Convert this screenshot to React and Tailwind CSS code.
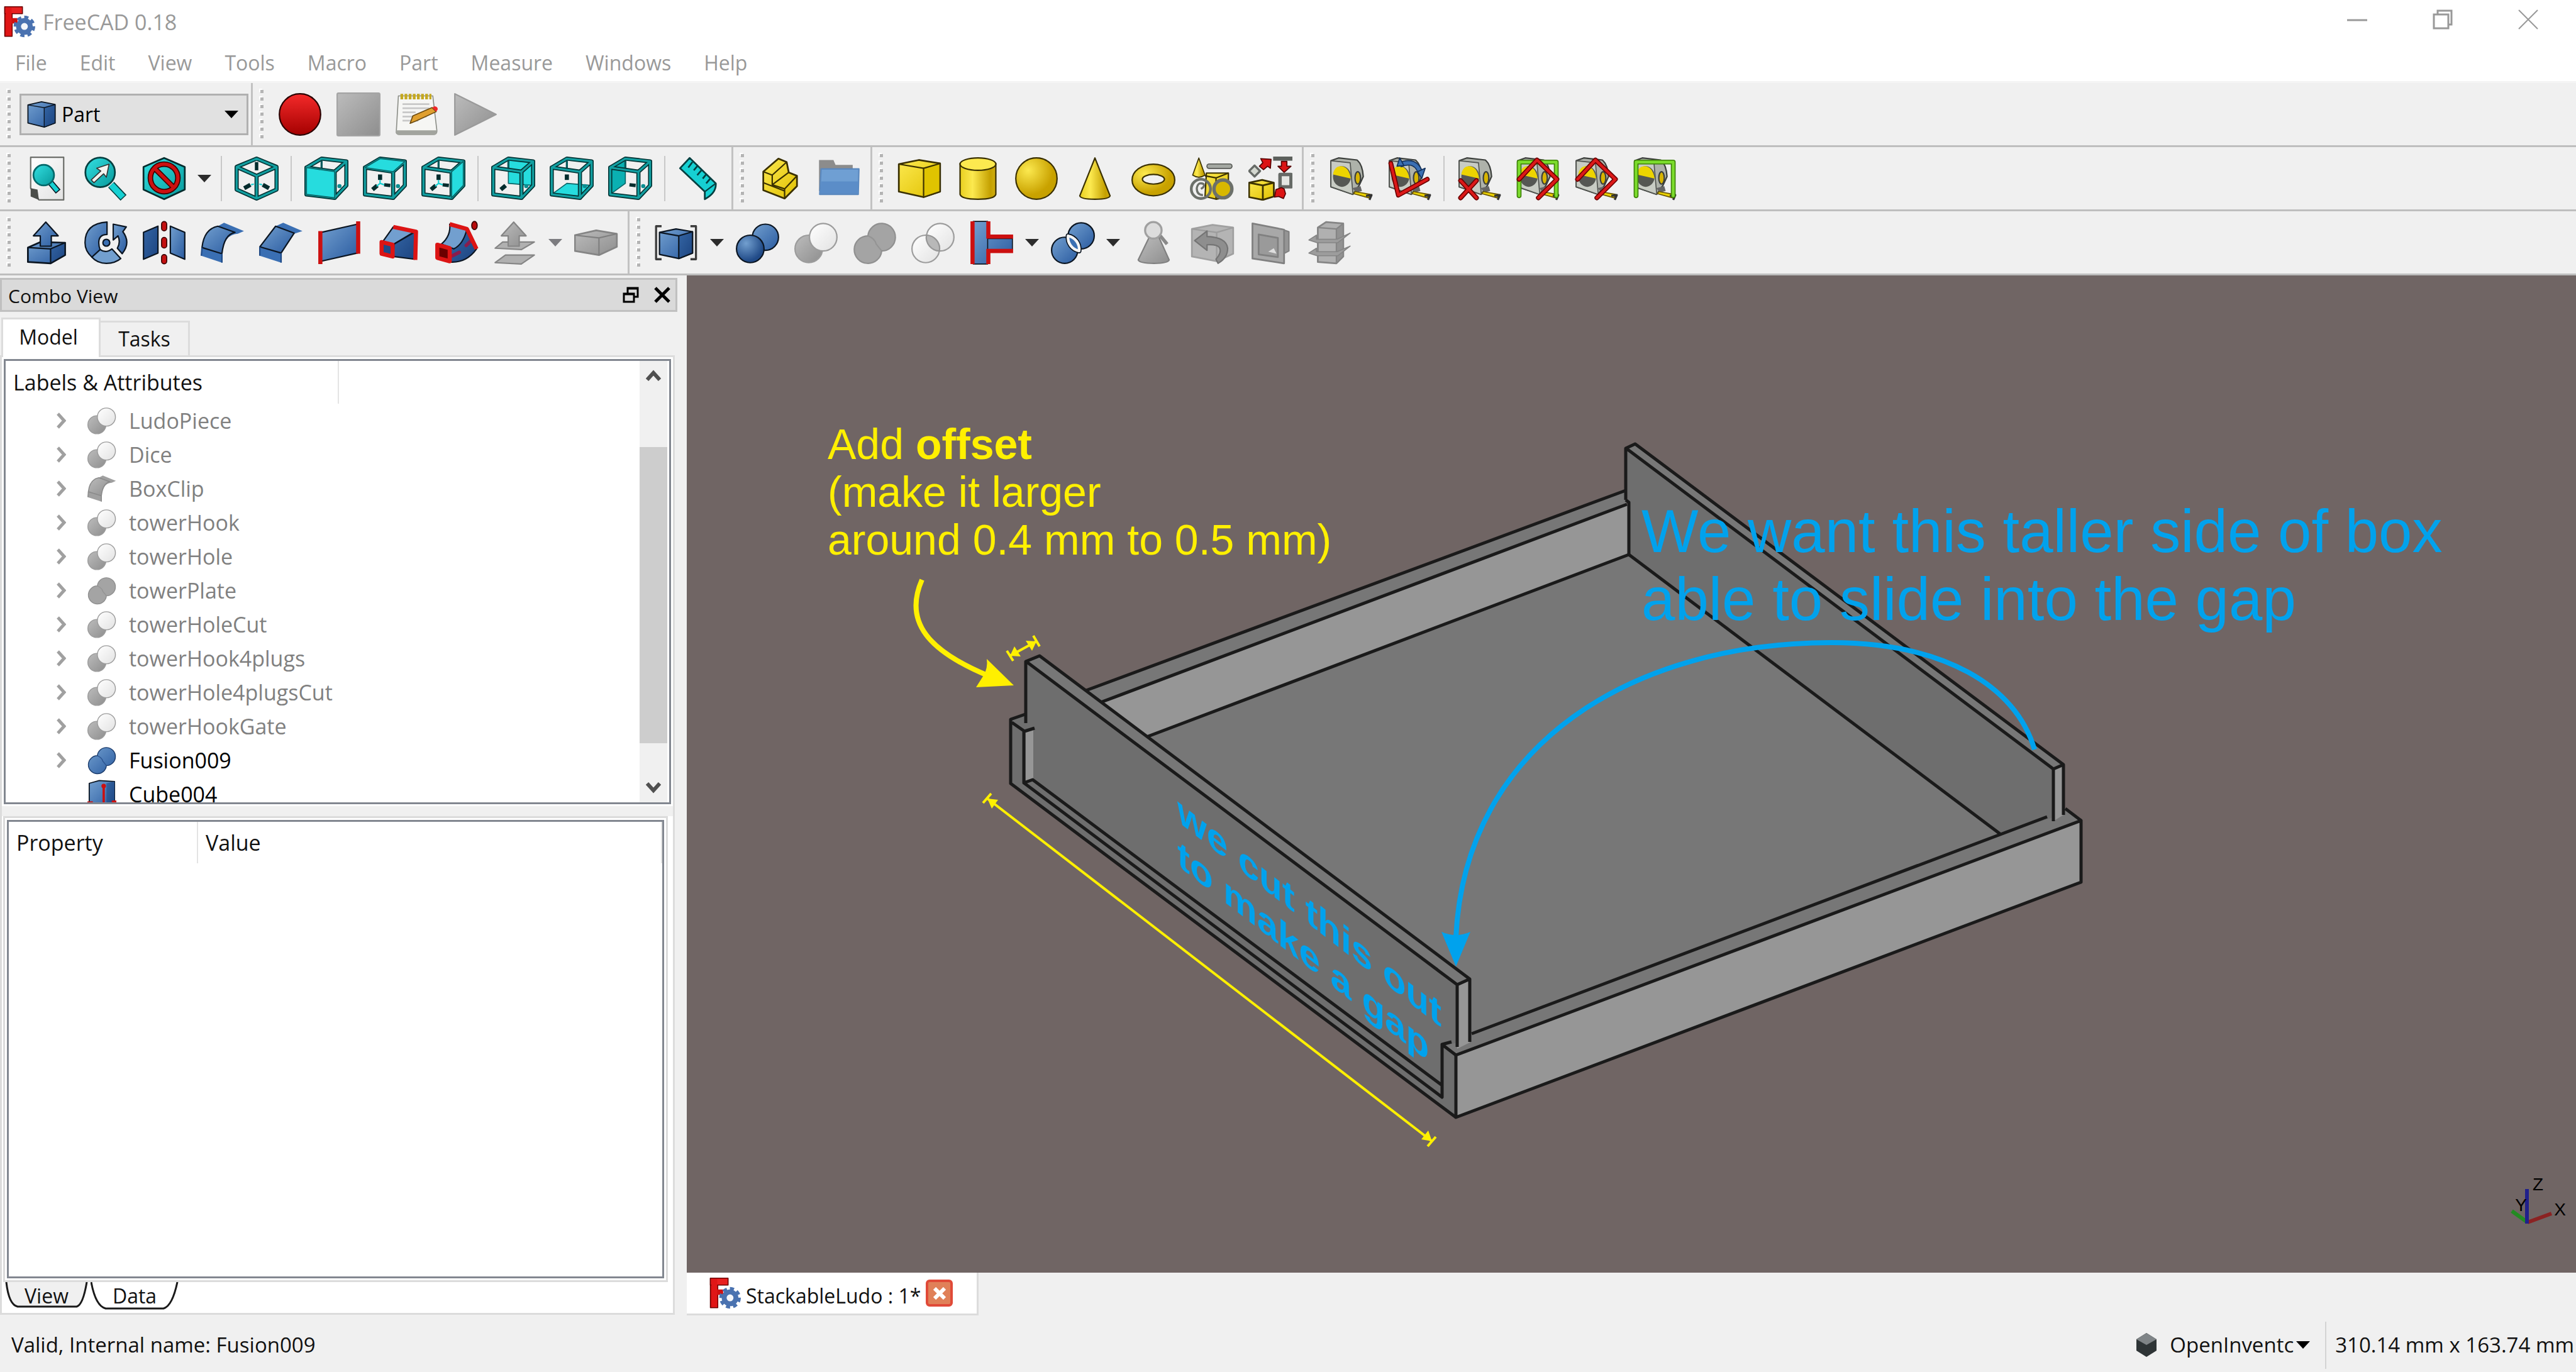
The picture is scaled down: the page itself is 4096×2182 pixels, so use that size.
import React from 'react';

const TEAL = '#16d0d2';
const TEAL_DARK = '#0b8f92';
const BLUE = '#3a6fb3';
const BLUE_LIGHT = '#729fcf';
const BLUE_DARK = '#1f4a87';
const INK = '#0b1521';

/* Gradients shared by every icon on the page */
const Gradients = () => (
  <svg className="absolute h-0 w-0" aria-hidden="true">
    <defs>
      <linearGradient id="blue" x1="0" y1="0" x2="1" y2="1">
        <stop offset="0" stopColor="#729fcf" />
        <stop offset="1" stopColor="#2a5ba0" />
      </linearGradient>
      <linearGradient id="navy" x1="0" y1="0" x2="1" y2="1">
        <stop offset="0" stopColor="#3465a4" />
        <stop offset="1" stopColor="#1c4480" />
      </linearGradient>
      <linearGradient id="yellow" x1="0" y1="0" x2="1" y2="1">
        <stop offset="0" stopColor="#fce94f" />
        <stop offset="1" stopColor="#e0c000" />
      </linearGradient>
      <radialGradient id="gold" cx="0.3" cy="0.3" r="0.8">
        <stop offset="0" stopColor="#fce94f" />
        <stop offset="0.75" stopColor="#c9a200" />
        <stop offset="1" stopColor="#c4a000" />
      </radialGradient>
      <linearGradient id="tube" x1="0" y1="0" x2="1" y2="0">
        <stop offset="0" stopColor="#e8cf20" />
        <stop offset="0.35" stopColor="#fce94f" />
        <stop offset="0.85" stopColor="#c4a000" />
        <stop offset="1" stopColor="#d0ae10" />
      </linearGradient>
      <radialGradient id="ball" cx="0.35" cy="0.3" r="0.8">
        <stop offset="0" stopColor="#729fcf" />
        <stop offset="0.8" stopColor="#204a87" />
      </radialGradient>
      <linearGradient id="grey" x1="0" y1="0" x2="1" y2="1">
        <stop offset="0" stopColor="#bcbcbc" />
        <stop offset="1" stopColor="#8e8e8e" />
      </linearGradient>
      <linearGradient id="white" x1="0" y1="0" x2="1" y2="1">
        <stop offset="0" stopColor="#ffffff" />
        <stop offset="1" stopColor="#e2e2e2" />
      </linearGradient>
      <linearGradient id="red" x1="0" y1="0" x2="0" y2="1">
        <stop offset="0" stopColor="#f42a2a" />
        <stop offset="1" stopColor="#a40000" />
      </linearGradient>
      <linearGradient id="teal" x1="0" y1="0" x2="1" y2="1">
        <stop offset="0" stopColor="#34e0e2" />
        <stop offset="1" stopColor="#06989a" />
      </linearGradient>
    </defs>
  </svg>
);

const Icon = ({ className = 'h-[70px] w-[70px]', children }) => (
  <svg viewBox="0 0 64 64" className={className} strokeLinejoin="round" aria-hidden="true">
    {children}
  </svg>
);

const Logo = ({ className }) => (
  <Icon className={className}>
    <rect x="2" y="1" width="15" height="60" fill="#d01010" stroke="#6a0000" strokeWidth="2" />
    <rect x="2" y="1" width="36" height="14" fill="#e82020" stroke="#6a0000" strokeWidth="2" />
    <rect x="10" y="24" width="18" height="11" fill="#d01010" />
    <rect x="4" y="3" width="12" height="57" fill="#e01616" />
    <circle cx="42" cy="41" r="18" fill="none" stroke="#4a72b0" strokeWidth="8" strokeDasharray="8 6" />
    <circle cx="42" cy="41" r="12" fill="#f4f6fa" stroke="#4a72b0" strokeWidth="10" />
  </Icon>
);

/* --- Macro icons --- */

const Record = () => (
  <Icon><circle cx="32" cy="32" r="30" fill="url(#red)" stroke="#280000" strokeWidth="2" /></Icon>
);
const Stop = () => (
  <Icon><rect x="1" y="1" width="62" height="62" rx="2" fill="url(#grey)" stroke="#a4a4a4" strokeWidth="2" /></Icon>
);
const Macros = () => (
  <Icon>
    <path d="M5 5H55L61 56Q61 61 56 61H6Q1 61 2 56Z" fill="#f6f6f4" stroke="#8c8e88" strokeWidth="1.5" />
    <path d="M2 55H61V58Q60 62 56 62H6Q2 62 2 58Z" fill="#a2a49e" />
    <path d="M8 6H53" stroke="#c4a820" strokeWidth="8" strokeDasharray="4 2" />
    <path d="M11 17H50M11 23H50M11 29H30M11 35H46M11 41H34" stroke="#c8c8c8" strokeWidth="2.5" />
    <path d="M22 45L26 34L54 22L60 28L32 41Z" fill="#e0a030" stroke="#6b4a10" strokeWidth="1.5" />
    <path d="M54 22L58 20Q63 21 62 25L60 28Z" fill="#ef2929" />
  </Icon>
);
const Play = () => (
  <Icon><path d="M2 2L62 32L2 62Z" fill="url(#grey)" stroke="#9a9a9a" strokeWidth="2" /></Icon>
);

/* --- View icons --- */

const FitAll = () => (
  <Icon>
    <path d="M8 1H56V63H20L8 46Z" fill="url(#white)" stroke="#6c6e6a" strokeWidth="2" />
    <path d="M8 46L18 48L20 63L8 58Z" fill="#4c4e4a" />
    <path d="M37 38L48 51" stroke={INK} strokeWidth="9" />
    <path d="M37 38L47 50" stroke={TEAL} strokeWidth="6" />
    <circle cx="27" cy="27" r="15" fill="url(#teal)" stroke="#04686a" strokeWidth="2.5" />
  </Icon>
);
const FitSelection = () => (
  <Icon>
    <path d="M40 41L58 60" stroke="#053f40" strokeWidth="12" />
    <path d="M40 41L57 59" stroke={TEAL} strokeWidth="9" />
    <circle cx="24" cy="23" r="21.5" fill="url(#teal)" stroke="#053f40" strokeWidth="2.5" />
    <path d="M11 34L25 21L19 17L37 11L33 30L29 25L15 38Z" fill="#f2f4f0" stroke="#333" strokeWidth="1.5" />
  </Icon>
);
const DrawStyle = () => (
  <Icon>
    <path d="M32 2L62 15V48L32 62L2 48V15Z" fill="url(#teal)" stroke="#052c2d" strokeWidth="2.5" />
    <circle cx="32" cy="31" r="20" fill="none" stroke="#3a0000" strokeWidth="8" />
    <path d="M18 17L46 45" stroke="#3a0000" strokeWidth="8" />
    <circle cx="32" cy="31" r="20" fill="none" stroke="#cc1010" strokeWidth="5" />
    <path d="M18 17L46 45" stroke="#cc1010" strokeWidth="5" />
  </Icon>
);
const Isometric = () => {
  const d = 'M32 3L61 15V48L32 61L3 48V15ZM3 15L32 28L61 15M32 28V61';
  return (
    <Icon>
      <path d="M32 8V20" stroke="#032c2d" strokeWidth="5" />
      <path d="M14 46L23 41M50 46L41 41" stroke="#032c2d" strokeWidth="6" />
      <path d="M24 41L28 40M40 41L36 40" stroke={TEAL} strokeWidth="2" />
      <path d={d} fill="none" stroke="#043233" strokeWidth="6" />
      <path d={d} fill="none" stroke="#129fa1" strokeWidth="3" />
    </Icon>
  );
};

const FACES = {
  front: '3,16 44,22 44,60 3,55',
  top: '3,16 25,3 61,7 44,22',
  right: '44,22 61,7 61,42 44,60',
  rear: '25,3 61,7 61,42 25,39',
  bottom: '3,55 25,39 61,42 44,60',
  left: '3,16 25,3 25,39 3,55',
};

const ViewCube = ({ face }) => {
  const near = face === 'front' || face === 'top' || face === 'right';
  const fill = face === 'left' ? '#0ab0b2' : '#26dcde';
  const frame = 'M3 16L44 22V60L3 55ZM3 16L25 3L61 7L44 22M61 7V42L44 60';
  return (
    <Icon>
      {!near && <polygon points={FACES[face]} fill={fill} stroke="#0a6668" strokeWidth="1.5" />}
      <path d="M25 6V18" stroke="#0b5c5e" strokeWidth="3" />
      {face !== 'rear' && face !== 'left' && <path d="M25 26V34" stroke="#032c2d" strokeWidth="6" />}
      {face !== 'bottom' && face !== 'left' && <path d="M14 48L21 42" stroke="#032c2d" strokeWidth="6" />}
      {face !== 'rear' && face !== 'bottom' && <path d="M31 41L40 42" stroke="#032c2d" strokeWidth="5" />}
      {near && <path d="M20 43L25 39L31 41M25 39V34" fill="none" stroke={TEAL} strokeWidth="2" />}
      <circle cx="51" cy="43" r="3" fill={TEAL_DARK} />
      <path d={frame} fill="none" stroke="#043233" strokeWidth="6" />
      <path d={frame} fill="none" stroke="#129fa1" strokeWidth="3" />
      {near && <polygon points={FACES[face]} fill={fill} stroke="#0a6668" strokeWidth="1.5" />}
    </Icon>
  );
};

const Ruler = () => (
  <Icon>
    <path d="M3 17L17 2L55 39Q56 53 39 62V51Z" fill={TEAL} stroke="#053f40" strokeWidth="2.5" />
    <path d="M39 51L55 39" stroke="#053f40" strokeWidth="2" />
    <path d="M21 8L15 16M28 14L23 20M34 20L28 27M41 26L36 32M47 32L41 39" stroke="#053f40" strokeWidth="2.5" />
  </Icon>
);

/* --- Structure icons --- */

const Part = () => (
  <Icon>
    <path d="M7 22L29 3L41 8L44 23L56 28V43L38 61L7 49Z" fill="url(#yellow)" stroke="#3a3000" strokeWidth="2.5" />
    <path d="M7 22L20 27L41 8M20 27V41L44 23M7 38L38 50V61M20 41L38 47L56 28M38 47V50" fill="none" stroke="#3a3000" strokeWidth="2" />
  </Icon>
);
const Group = () => (
  <Icon>
    <path d="M3 5H24L27 12H52V50H3Z" fill="#8c8c8c" />
    <path d="M6 18H61L60 55H4Z" fill="#6f9fd3" stroke="#5a88be" strokeWidth="2" />
    <path d="M6 36H60V54H5Z" fill="#5b8dc8" />
  </Icon>
);

/* --- Solid icons --- */

const Box = () => (
  <Icon>
    <path d="M2 11L31 5L62 10V51L38 59L2 51Z" fill="url(#yellow)" stroke="#3a3000" strokeWidth="2.5" />
    <path d="M38 17L62 10V51L38 59Z" fill="#e0c400" stroke="#3a3000" strokeWidth="2" />
    <path d="M2 11L38 17" stroke="#3a3000" strokeWidth="2" />
  </Icon>
);
const Cylinder = () => (
  <Icon>
    <path d="M6 10V55Q8 62 32 62Q56 62 58 55V10Z" fill="url(#tube)" stroke="#3a3000" strokeWidth="2" />
    <ellipse cx="32" cy="11" rx="26" ry="9" fill="#fce94f" stroke="#3a3000" strokeWidth="2" />
  </Icon>
);
const Sphere = () => (
  <Icon><circle cx="32" cy="32" r="30" fill="url(#gold)" stroke="#3a3000" strokeWidth="2" /></Icon>
);
const Cone = () => (
  <Icon><path d="M32 2L54 57Q53 62 32 62Q11 62 10 57Z" fill="url(#tube)" stroke="#3a3000" strokeWidth="2" /></Icon>
);
const Torus = () => (
  <Icon>
    <path
      fillRule="evenodd"
      d="M1 34A31 23 0 0 0 63 34A31 23 0 0 0 1 34ZM16 33A16 7 0 0 0 48 33A16 7 0 0 0 16 33Z"
      fill="url(#gold)"
      stroke="#3a3000"
      strokeWidth="2"
    />
  </Icon>
);
const Primitives = () => (
  <Icon>
    <path d="M24 24L56 24V58L38 62L22 58Z" fill="url(#yellow)" stroke="#3a3000" strokeWidth="2" />
    <path d="M22 28L38 31L56 24M38 31V62" fill="none" stroke="#3a3000" strokeWidth="2" />
    <path d="M13 2L22 27Q13 33 4 27Z" fill="url(#tube)" stroke="#3a3000" strokeWidth="1.5" />
    <path d="M28 14H58" stroke="#555753" strokeWidth="8" strokeLinecap="round" />
    <path d="M28 14H58" stroke="#a4a8a2" strokeWidth="5" strokeLinecap="round" />
    <circle cx="16" cy="47" r="14" fill="none" stroke="#6c706a" strokeWidth="4" />
    <path d="M16 47Q22 44 20 40Q12 36 10 46Q10 56 19 56" fill="none" stroke="#6c706a" strokeWidth="3" />
    <circle cx="48" cy="47" r="13" fill="#d8b800" stroke="#6c706a" strokeWidth="5" />
  </Icon>
);
const Builder = () => (
  <Icon>
    <path d="M1 38L20 34L37 38V58L21 63L1 59Z" fill="url(#yellow)" stroke="#3a3000" strokeWidth="2.5" />
    <path d="M1 38L21 42L37 38M21 42V63" fill="none" stroke="#3a3000" strokeWidth="2.5" />
    <path d="M9 13L17 21L9 29L1 21Z" fill="#d3d7cf" stroke="#666a66" strokeWidth="3" />
    <path d="M18 3L33 4L32 17L28 14L22 19L16 14L21 9Z" fill="#dc1414" stroke="#500" strokeWidth="1.5" />
    <path d="M36 3H64" stroke="#5c605c" strokeWidth="6" />
    <path d="M48 7H56V14H62L52 23L43 14H48Z" fill="#dc1414" stroke="#500" strokeWidth="1.5" />
    <rect x="46" y="26" width="16" height="18" fill="#e4e6e2" stroke="#666a66" strokeWidth="5" />
    <path d="M40 48L48 45L52 47L54 54L51 61L44 58L38 59Z" fill="#dc1414" stroke="#500" strokeWidth="1.5" />
  </Icon>
);

/* --- Measure icons --- */

const Tape = () => (
  <>
    <path d="M3 6L14 2L41 5Q49 12 50 29L44 42L35 55L3 44Z" fill="#aeb2aa" stroke="#3c3f3c" strokeWidth="2" />
    <path d="M3 6L31 9L35 55L3 44Z" fill="#c8ccc4" stroke="#50534f" strokeWidth="1.5" />
    <ellipse cx="19" cy="29" rx="13" ry="15" fill="#555753" />
    <path d="M6 26Q8 14 18 14Q29 15 32 32Z" fill="#edd400" />
    <ellipse cx="42" cy="31" rx="4" ry="9" fill="#d8b400" stroke="#3c3f3c" strokeWidth="2" />
    <path d="M34 46L46 43L48 50L40 52Z" fill="#666" />
    <path d="M38 51L60 55L58 60L36 54Z" fill="#edd400" stroke="#6a5600" strokeWidth="1.5" />
    <path d="M54 57L62 56L59 63" fill="none" stroke="#333" strokeWidth="3" />
  </>
);

const Rod = ({ d, color, edge }) => (
  <>
    <path d={d} fill="none" stroke={edge} strokeWidth="7" strokeLinecap="round" />
    <path d={d} fill="none" stroke={color} strokeWidth="4" strokeLinecap="round" />
  </>
);

const MeasureLinear = () => <Icon><Tape /></Icon>;
const MeasureAngular = () => (
  <Icon>
    <Tape />
    <path d="M18 12Q42 2 49 26" fill="none" stroke="#12305a" strokeWidth="8" />
    <path d="M18 12Q42 2 49 26" fill="none" stroke={BLUE} strokeWidth="5" />
    <path d="M14 14L18 2L24 13ZM44 22L55 17L50 32Z" fill={BLUE} stroke="#12305a" strokeWidth="1.5" />
    <Rod d="M5 10L16 56L58 33" color="#dc1818" edge="#6a0000" />
  </Icon>
);
const MeasureClear = () => (
  <Icon>
    <Tape />
    <Rod d="M5 35L28 60M28 35L5 60" color="#dc1818" edge="#6a0000" />
  </Icon>
);
const MeasureAll = () => (
  <Icon>
    <Tape />
    <Rod d="M5 57V8H59V57" color="#7cdc2c" edge="#3c8008" />
    <Rod d="M5 33L31 5L60 33L33 60" color="#dc1818" edge="#6a0000" />
  </Icon>
);
const Measure3D = () => (
  <Icon>
    <Tape />
    <Rod d="M5 33L31 5L60 33L33 60" color="#dc1818" edge="#6a0000" />
  </Icon>
);
const MeasureDelta = () => (
  <Icon>
    <Tape />
    <Rod d="M5 57V8H59V57" color="#7cdc2c" edge="#3c8008" />
  </Icon>
);

/* --- Part tool icons --- */

const Extrude = () => (
  <Icon>
    <path d="M4 39L22 31L58 32V50L37 62L4 60Z" fill="url(#blue)" stroke={INK} strokeWidth="2.5" />
    <path d="M37 41L58 32V50L37 62Z" fill="url(#navy)" stroke={INK} strokeWidth="2" />
    <path d="M4 39L37 41" stroke={INK} strokeWidth="2" />
    <path d="M30 2L48 22H38V37H22V22H12Z" fill="url(#blue)" stroke={INK} strokeWidth="2" />
  </Icon>
);
const Revolve = () => (
  <Icon>
    <path d="M34 2V20Q22 20 22 32Q22 38 24 42L12 53Q2 44 2 32Q2 4 34 2Z" fill="url(#blue)" stroke={INK} strokeWidth="2" />
    <path d="M12 53L24 42Q32 48 41 41L54 55Q46 62 33 62Q20 62 12 53Z" fill={BLUE_LIGHT} stroke={INK} strokeWidth="2" />
    <path d="M43 5L62 9L57 16Q69 32 56 48L49 40Q54 32 50 22L43 28Z" fill="url(#blue)" stroke={INK} strokeWidth="2" />
    <circle cx="33" cy="32" r="5" fill={BLUE} stroke={INK} strokeWidth="2" />
  </Icon>
);
const Mirror = () => (
  <Icon>
    <path d="M2 17L23 8V47L2 56Z" fill="url(#navy)" stroke={INK} strokeWidth="2" />
    <path d="M62 17L41 8V47L62 56Z" fill="url(#blue)" stroke={INK} strokeWidth="2" />
    <path d="M32 5V11M32 28V36M32 53V59" stroke="#3a0000" strokeWidth="9" strokeLinecap="round" />
    <path d="M32 5V11M32 28V36M32 53V59" stroke="#c41010" strokeWidth="6" strokeLinecap="round" />
  </Icon>
);
const Fillet = ({ className, off }) => (
  <Icon className={className}>
    <path d="M1 51L2 39Q5 12 25 8L34 3L63 15L54 19Q34 20 31 48V61Z" fill={off ? '#a0a0a0' : BLUE} />
    <path
      d="M2 39Q5 12 25 8L50 17Q34 20 31 48Z"
      fill={off ? 'url(#grey)' : 'url(#blue)'}
      stroke={off ? '#8a8a8a' : INK}
      strokeWidth="2"
    />
    <path d="M2 39L1 51M31 48V61" stroke={off ? '#8a8a8a' : BLUE_DARK} strokeWidth="2" />
  </Icon>
);
const Chamfer = () => (
  <Icon>
    <path d="M1 51V38L24 8L35 3L63 15L51 19L32 47V61Z" fill={BLUE} />
    <path d="M1 38L24 8L51 18L32 47Z" fill="url(#blue)" stroke={INK} strokeWidth="2" />
    <path d="M1 38V51M32 47V61" stroke={BLUE_DARK} strokeWidth="2" />
  </Icon>
);
const RuledSurface = () => (
  <Icon>
    <path d="M5 17L58 5V47L5 59Z" fill="url(#blue)" stroke={INK} strokeWidth="2" />
    <path d="M4 15V63M59 1V48" stroke="#cc1010" strokeWidth="6" />
  </Icon>
);
const Loft = () => (
  <Icon>
    <path d="M10 30L25 9L56 16L26 34Z" fill={BLUE_LIGHT} stroke={INK} strokeWidth="2" />
    <path d="M26 34L57 16L56 56L25 52Z" fill="url(#navy)" stroke={INK} strokeWidth="2" />
    <path d="M25 9L58 16L57 57" fill="none" stroke="#dc1414" strokeWidth="6" />
    <path d="M8 31L24 35V52L8 48Z" fill={BLUE_DARK} stroke="#dc1414" strokeWidth="6" />
  </Icon>
);
const Sweep = () => (
  <Icon>
    <path d="M23 40L47 12L61 41Q46 62 22 60Z" fill="url(#navy)" stroke={INK} strokeWidth="2" />
    <path d="M10 34Q24 22 22 5L47 12Q42 34 28 41Z" fill={BLUE_LIGHT} stroke={INK} strokeWidth="2" />
    <path d="M26 51L36 46M46 36L52 30" stroke="#8a1c4c" strokeWidth="5" strokeLinecap="round" />
    <path d="M22 5L47 12L61 41" fill="none" stroke="#dc1414" strokeWidth="6" />
    <path d="M4 35L22 40V59L4 54Z" fill="#6a0000" stroke="#dc1414" strokeWidth="6" />
    <ellipse cx="58" cy="7" rx="4" ry="6" fill="#b80c0c" stroke="#3a0000" strokeWidth="1.5" />
  </Icon>
);
const Offset = () => (
  <Icon>
    <path d="M3 61L18 50L60 50L41 63ZM3 40L14 31L60 31L41 42Z" fill="#b0b0b0" stroke="#858585" strokeWidth="2" />
    <path d="M30 2L48 22H38V37H22V22H12Z" fill="url(#grey)" stroke="#858585" strokeWidth="2" />
  </Icon>
);
const Thickness = () => (
  <Icon>
    <path d="M1 21L32 14L62 19V38L36 50L1 44Z" fill="url(#grey)" stroke="#858585" strokeWidth="2.5" />
    <path d="M1 21L36 25L62 19M36 25V50" fill="none" stroke="#808080" strokeWidth="2" />
  </Icon>
);
const Compound = () => (
  <Icon>
    <path d="M10 8H2V56H10M52 8H60V56H52" fill="none" stroke="#3c3c3c" strokeWidth="3" />
    <path d="M7 17L31 12L55 16V47L35 55L7 49Z" fill="url(#blue)" stroke={INK} strokeWidth="2" />
    <path d="M35 22L55 16V47L35 55Z" fill="url(#navy)" stroke={INK} strokeWidth="2" />
    <path d="M7 17L35 22" stroke={INK} strokeWidth="2" />
  </Icon>
);
const Boolean = () => (
  <Icon>
    <circle cx="43" cy="24" r="19" fill="url(#blue)" stroke={INK} strokeWidth="2" />
    <circle cx="21" cy="41" r="20" fill="url(#ball)" stroke={INK} strokeWidth="2" />
  </Icon>
);
const Cut = ({ className }) => (
  <Icon className={className}>
    <circle cx="21" cy="41" r="20" fill="url(#grey)" stroke="#9c9c9c" strokeWidth="2" />
    <circle cx="42" cy="24" r="20" fill="url(#white)" stroke="#9c9c9c" strokeWidth="2" />
  </Icon>
);
const Union = ({ className, on }) => (
  <Icon className={className}>
    <path
      d="M22 22A20 20 0 1 1 42 44A20 20 0 1 1 22 22Z"
      fill={on ? 'url(#blue)' : '#a4a4a4'}
      stroke={on ? '#1c3c6c' : '#909090'}
      strokeWidth="2"
    />
    <path d="M22 22Q32 26 34 34L42 44" fill="none" stroke={on ? '#2c5490' : '#949494'} strokeWidth="2" />
  </Icon>
);
const Common = () => (
  <Icon>
    <circle cx="42" cy="24" r="20" fill="url(#white)" stroke="#9c9c9c" strokeWidth="2" />
    <circle cx="21" cy="41" r="20" fill="url(#white)" stroke="#9c9c9c" strokeWidth="2" />
    <path d="M22 21A20 20 0 0 0 41 44A20 20 0 0 0 22 21Z" fill="#b8b8b8" stroke="#969696" strokeWidth="2" />
  </Icon>
);
const Connect = () => (
  <Icon>
    <path d="M5 1H26V63H5ZM26 26H62V42H26Z" fill="url(#blue)" stroke={INK} strokeWidth="1.5" />
    <path d="M4 1V63M27 1V23H63M27 63V44H63" fill="none" stroke="#cc1010" strokeWidth="6" strokeLinejoin="miter" />
  </Icon>
);
const Split = () => (
  <Icon>
    <circle cx="44" cy="22" r="19" fill="url(#blue)" stroke={INK} strokeWidth="2" />
    <circle cx="20" cy="43" r="19" fill="url(#blue)" stroke={INK} strokeWidth="2" />
    <path d="M25 22A20 20 0 0 0 41 44A20 20 0 0 0 25 22Z" fill={BLUE} stroke={INK} strokeWidth="7" />
    <path d="M25 22A20 20 0 0 0 41 44A20 20 0 0 0 25 22Z" fill={BLUE} stroke="#f4f4f4" strokeWidth="4" />
  </Icon>
);
const CheckGeometry = () => (
  <Icon>
    <path d="M41 22L51 34" stroke="#8a8a8a" strokeWidth="5" />
    <path d="M25 24H39L54 57Q52 62 32 62Q11 62 9 57Z" fill="url(#grey)" stroke="#808080" strokeWidth="2" />
    <circle cx="31" cy="14" r="12" fill="#dcdcdc" stroke="#a0a0a0" strokeWidth="3" />
  </Icon>
);
const Defeaturing = () => (
  <Icon>
    <path d="M2 12L32 6L62 10V48L38 59L2 52Z" fill="#b4b4b4" stroke="#a0a0a0" strokeWidth="2.5" />
    <path d="M2 12L38 17L62 10M38 17V59" fill="none" stroke="#9c9c9c" strokeWidth="2" />
    <path d="M6 29L24 15V23Q52 24 54 40Q54 54 40 62L37 56Q46 46 42 39Q38 34 24 35V43Z" fill="#8e8e8e" stroke="#747474" strokeWidth="2" />
  </Icon>
);
const Section = () => (
  <Icon>
    <path d="M46 12L58 16V44L50 48" fill="#959595" stroke="#808080" strokeWidth="2" />
    <path d="M5 4L51 13V62L5 55Z" fill="#a8a8a8" stroke="#808080" strokeWidth="2.5" />
    <path d="M14 20L42 25V53L14 49Z" fill="#9a9a9a" stroke="#808080" strokeWidth="2.5" />
    <path d="M28 45L36 40L40 48Z" fill="#dedede" />
  </Icon>
);
const CrossSections = () => (
  <Icon>
    <path d="M15 10L27 2L52 4V52L42 62L15 60Z" fill="#b0b0b0" stroke="#858585" strokeWidth="2.5" />
    <path d="M42 12L52 4V52L42 62Z" fill="#929292" stroke="#858585" strokeWidth="2" />
    <path d="M15 10L42 12" stroke="#858585" strokeWidth="2" />
    <path d="M2 28L13 21V27H43L62 18L44 32H14Z" fill="#9c9c9c" stroke="#858585" strokeWidth="1.5" />
    <path d="M2 47L13 40V45H43L62 37L44 51H14Z" fill="#9c9c9c" stroke="#858585" strokeWidth="1.5" />
  </Icon>
);

const PartCube = ({ className }) => (
  <Icon className={className}>
    <path d="M2 11L32 4L62 10V51L38 60L2 51Z" fill="url(#blue)" stroke={INK} strokeWidth="2.5" />
    <path d="M38 17L62 10V51L38 60Z" fill="url(#navy)" stroke={INK} strokeWidth="2" />
    <path d="M2 11L38 17" stroke={INK} strokeWidth="2" />
  </Icon>
);
const AxisCube = ({ className }) => (
  <Icon className={className}>
    <path d="M4 8L26 2L60 4V62H4Z" fill="url(#blue)" stroke={INK} strokeWidth="2.5" />
    <path d="M42 8L60 4V62H42Z" fill="url(#navy)" />
    <path d="M36 14V52L4 60M36 52L60 60" stroke="#cc1010" strokeWidth="5" fill="none" />
    <circle cx="36" cy="14" r="5" fill="#cc1010" />
    <path d="M0 48H12V64H0ZM54 46H64V64H54Z" fill="#cc1010" />
  </Icon>
);

/* --- Toolbar pieces --- */

const Handle = () => (
  <div className="flex w-7 flex-col items-center gap-[7px] self-center">
    {[0, 1, 2, 3, 4, 5, 6].map((n) => (
      <span key={n} className="h-[5px] w-[5px] bg-[#b4b4b4] shadow-[-2px_-2px_0_#ffffff]" />
    ))}
  </div>
);

const ToolGroup = ({ label, last, children }) => (
  <div
    role="toolbar"
    aria-label={label}
    className={last ? 'flex items-stretch' : 'flex items-stretch border-r-[3px] border-[#c2c2c2] pr-1'}
  >
    <Handle />
    {children}
  </div>
);

const Tool = ({ label, children }) => (
  <button type="button" aria-label={label} title={label} className="flex w-[93px] items-center justify-center">
    {children}
  </button>
);

const Triangle = ({ className }) => (
  <svg viewBox="0 0 22 12" className={className} aria-hidden="true">
    <path d="M0 0H22L11 12Z" fill="currentColor" />
  </svg>
);

const More = ({ label, off }) => (
  <button
    type="button"
    aria-label={label}
    className={off ? 'flex w-9 items-center justify-center text-[#7c7c80]' : 'flex w-9 items-center justify-center text-[#2c2c2c]'}
  >
    <Triangle className="h-3 w-[22px]" />
  </button>
);

const Separator = () => (
  <div className="flex w-[18px] items-center justify-center">
    <span className="h-[72px] w-[2px] bg-[#c8c8c8]" />
  </div>
);

const ToolRow = ({ children }) => (
  <div className="flex h-[102px] items-stretch border-b-[3px] border-[#bebebe] bg-[#f0f0f0]">{children}</div>
);

/* --- Tree data --- */

const treeItems = [
  { name: 'LudoPiece', icon: Cut },
  { name: 'Dice', icon: Cut },
  { name: 'BoxClip', icon: Fillet },
  { name: 'towerHook', icon: Cut },
  { name: 'towerHole', icon: Cut },
  { name: 'towerPlate', icon: Union },
  { name: 'towerHoleCut', icon: Cut },
  { name: 'towerHook4plugs', icon: Cut },
  { name: 'towerHole4plugsCut', icon: Cut },
  { name: 'towerHookGate', icon: Cut },
  { name: 'Fusion009', icon: Union, on: true },
  { name: 'Cube004', icon: AxisCube, on: true, leaf: true },
];

const menus = ['File', 'Edit', 'View', 'Tools', 'Macro', 'Part', 'Measure', 'Windows', 'Help'];

const TitleBar = () => (
  <header className="bg-white">
    <div className="flex h-[70px] items-center pl-[6px] pr-2">
      <Logo className="h-[50px] w-[50px]" />
      <h1 className="ml-3 text-[#999999]">FreeCAD 0.18</h1>
      <div className="ml-auto flex h-full pb-2 text-[#999999]">
        <button type="button" aria-label="Minimize" className="flex w-34 items-center justify-center">
          <svg viewBox="0 0 32 32" className="h-8 w-8"><path d="M0 17H32" stroke="currentColor" strokeWidth="3" /></svg>
        </button>
        <button type="button" aria-label="Restore" className="flex w-34 items-center justify-center">
          <svg viewBox="0 0 32 32" className="h-8 w-8" fill="none" stroke="currentColor" strokeWidth="3">
            <path d="M2 8H25V30H2ZM8 8V2H30V24H25" />
          </svg>
        </button>
        <button type="button" aria-label="Close" className="flex w-34 items-center justify-center">
          <svg viewBox="0 0 32 32" className="h-8 w-8"><path d="M1 1L31 31M31 1L1 31" stroke="currentColor" strokeWidth="2" /></svg>
        </button>
      </div>
    </div>
    <nav className="flex h-[62px] items-center gap-[52px] border-b-[3px] border-[#f4f4f4] pl-6 text-[32px] text-[#999999]">
      {menus.map((menu) => (
        <button key={menu} type="button">{menu}</button>
      ))}
    </nav>
  </header>
);

const Toolbars = () => (
  <div>
    <ToolRow>
      <ToolGroup label="Workbench">
        <div className="relative ml-[3px] self-center">
          <label htmlFor="workbench" className="sr-only">Workbench</label>
          <select
            id="workbench"
            className="h-[66px] w-[364px] appearance-none border-[3px] border-[#b0b0b0] bg-[#e1e1e1] pl-16 text-[32px] leading-[48px] text-black"
          >
            <option>Part</option>
          </select>
          <PartCube className="pointer-events-none absolute left-3 top-[10px] h-[46px] w-[46px]" />
          <Triangle className="pointer-events-none absolute right-4 top-[27px] h-3 w-[22px] text-black" />
        </div>
      </ToolGroup>
      <ToolGroup label="Macro" last>
        <Tool label="Record macro"><Record /></Tool>
        <Tool label="Stop recording"><Stop /></Tool>
        <Tool label="Macros"><Macros /></Tool>
        <Tool label="Execute macro"><Play /></Tool>
      </ToolGroup>
    </ToolRow>

    <ToolRow>
      <ToolGroup label="View">
        <Tool label="Fit all"><FitAll /></Tool>
        <Tool label="Fit selection"><FitSelection /></Tool>
        <Tool label="Draw style"><DrawStyle /></Tool>
        <More label="Draw style options" />
        <Separator />
        <Tool label="Isometric"><Isometric /></Tool>
        <Separator />
        <Tool label="Front"><ViewCube face="front" /></Tool>
        <Tool label="Top"><ViewCube face="top" /></Tool>
        <Tool label="Right"><ViewCube face="right" /></Tool>
        <Separator />
        <Tool label="Rear"><ViewCube face="rear" /></Tool>
        <Tool label="Bottom"><ViewCube face="bottom" /></Tool>
        <Tool label="Left"><ViewCube face="left" /></Tool>
        <Separator />
        <Tool label="Measure distance"><Ruler /></Tool>
      </ToolGroup>
      <ToolGroup label="Structure">
        <Tool label="Create part"><Part /></Tool>
        <Tool label="Create group"><Group /></Tool>
      </ToolGroup>
      <ToolGroup label="Solids">
        <Tool label="Box"><Box /></Tool>
        <Tool label="Cylinder"><Cylinder /></Tool>
        <Tool label="Sphere"><Sphere /></Tool>
        <Tool label="Cone"><Cone /></Tool>
        <Tool label="Torus"><Torus /></Tool>
        <Tool label="Create primitives"><Primitives /></Tool>
        <Tool label="Shape builder"><Builder /></Tool>
      </ToolGroup>
      <ToolGroup label="Measure" last>
        <Tool label="Measure linear"><MeasureLinear /></Tool>
        <Tool label="Measure angular"><MeasureAngular /></Tool>
        <Separator />
        <Tool label="Clear all"><MeasureClear /></Tool>
        <Tool label="Toggle all"><MeasureAll /></Tool>
        <Tool label="Toggle 3D"><Measure3D /></Tool>
        <Tool label="Toggle delta"><MeasureDelta /></Tool>
      </ToolGroup>
    </ToolRow>

    <ToolRow>
      <ToolGroup label="Part tools">
        <Tool label="Extrude"><Extrude /></Tool>
        <Tool label="Revolve"><Revolve /></Tool>
        <Tool label="Mirroring"><Mirror /></Tool>
        <Tool label="Fillet"><Fillet /></Tool>
        <Tool label="Chamfer"><Chamfer /></Tool>
        <Tool label="Ruled surface"><RuledSurface /></Tool>
        <Tool label="Loft"><Loft /></Tool>
        <Tool label="Sweep"><Sweep /></Tool>
        <Tool label="Offset"><Offset /></Tool>
        <More label="Offset options" off />
        <Tool label="Thickness"><Thickness /></Tool>
      </ToolGroup>
      <ToolGroup label="Boolean" last>
        <Tool label="Compound"><Compound /></Tool>
        <More label="Compound options" />
        <Tool label="Boolean"><Boolean /></Tool>
        <Tool label="Cut"><Cut /></Tool>
        <Tool label="Union"><Union /></Tool>
        <Tool label="Intersection"><Common /></Tool>
        <Tool label="Connect"><Connect /></Tool>
        <More label="Connect options" />
        <Tool label="Boolean fragments"><Split /></Tool>
        <More label="Split options" />
        <Tool label="Check geometry"><CheckGeometry /></Tool>
        <Tool label="Defeaturing"><Defeaturing /></Tool>
        <Tool label="Section"><Section /></Tool>
        <Tool label="Cross-sections"><CrossSections /></Tool>
      </ToolGroup>
    </ToolRow>
  </div>
);

const TreeRow = ({ item }) => {
  const ItemIcon = item.icon;
  return (
    <li className="flex h-[54px] items-center pl-20">
      <span className="flex w-[50px] shrink-0">
        {!item.leaf && (
          <button type="button" aria-label={`Expand ${item.name}`}>
            <svg viewBox="0 0 16 26" className="h-[26px] w-4" fill="none" stroke="#a0a0a0" strokeWidth="5">
              <path d="M3 2L13 13L3 24" />
            </svg>
          </button>
        )}
      </span>
      <ItemIcon className="h-[46px] w-[46px] shrink-0" on={item.on} off={!item.on} />
      <span className={item.on ? 'ml-5 text-black' : 'ml-5 text-[#808080]'}>{item.name}</span>
    </li>
  );
};

const ScrollArrow = ({ label, d }) => (
  <button type="button" aria-label={label} className="flex h-12 items-center justify-center">
    <svg viewBox="0 0 24 20" className="h-5 w-6" fill="none" stroke="#505050" strokeWidth="6"><path d={d} /></svg>
  </button>
);

const ComboView = () => (
  <aside className="flex w-[1077px] shrink-0 flex-col pb-[1px] pt-1">
    <div className="flex h-[54px] shrink-0 items-center border-[3px] border-[#c0c0c0] bg-[#dadada] pl-[10px] pr-2">
      <h2 className="pt-1 text-[30px]">Combo View</h2>
      <button type="button" aria-label="Float" className="ml-auto">
        <svg viewBox="0 0 26 26" className="h-[26px] w-[26px]" fill="none" stroke="#000000" strokeWidth="3">
          <path d="M2 11H18V24H2ZM2 12H18M8 10V2H24V16H19M8 3H24" />
        </svg>
      </button>
      <button type="button" aria-label="Close panel" className="ml-6">
        <svg viewBox="0 0 26 26" className="h-[26px] w-[26px]"><path d="M2 2L24 24M24 2L2 24" stroke="#000000" strokeWidth="5" /></svg>
      </button>
    </div>

    <div role="tablist" className="mt-[9px] flex h-[60px] shrink-0 items-end pl-[2px] text-[32px]">
      <button
        type="button"
        role="tab"
        aria-selected="true"
        className="relative z-10 -mb-[3px] h-[63px] w-[158px] border-[3px] border-b-0 border-[#dcdcdc] bg-white pb-1 pr-2"
      >
        Model
      </button>
      <button type="button" role="tab" aria-selected="false" className="h-[55px] w-[142px] border-[3px] border-b-0 border-l-0 border-[#dcdcdc]">
        Tasks
      </button>
    </div>

    <div className="mr-1 flex min-h-0 flex-1 flex-col border-[3px] border-[#dcdcdc] bg-white">
      <div className="m-[3px] flex h-[708px] shrink-0 border-[3px] border-[#828790] bg-white">
        <div className="min-w-0 flex-1 overflow-hidden">
          <div className="flex h-[68px] items-stretch">
            <div className="flex w-[530px] items-center border-r-2 border-[#e4e4e4] pl-3">Labels &amp; Attributes</div>
          </div>
          <ul>
            {treeItems.map((item) => (
              <TreeRow key={item.name} item={item} />
            ))}
          </ul>
        </div>
        <div className="mr-[3px] flex w-11 flex-col bg-[#f0f0f0]">
          <ScrollArrow label="Scroll up" d="M2 16L12 5L22 16" />
          <div className="flex flex-1 flex-col pb-[46px] pt-[89px]">
            <div className="flex-1 bg-[#cdcdcd]" />
          </div>
          <ScrollArrow label="Scroll down" d="M2 4L12 15L22 4" />
        </div>
      </div>

      <div className="h-4 shrink-0 bg-[#f0f0f0]" />

      <div className="ml-[2px] mr-2 flex min-h-0 flex-1 flex-col border-[3px] border-[#dcdcdc] p-[3px]">
        <div className="flex-1 border-[3px] border-[#828790]">
          <table className="w-full table-fixed border-collapse text-left">
            <thead>
              <tr className="h-[66px]">
                <th className="w-[300px] border-r-2 border-[#e4e4e4] pl-3 font-normal">Property</th>
                <th className="border-r-2 border-[#e4e4e4] pl-3 font-normal">Value</th>
              </tr>
            </thead>
          </table>
        </div>
      </div>

      <div role="tablist" className="flex h-[49px] shrink-0 items-start pl-[5px] text-[32px]">
        <button type="button" role="tab" aria-selected="false" className="relative h-[41px] w-[132px] pb-1">
          <svg viewBox="0 0 132 41" className="absolute inset-0 h-full w-full" aria-hidden="true">
            <path d="M2 0Q6 36 20 39H114Q124 36 130 0" fill="#f0f0f0" stroke="#1a1a1a" strokeWidth="3" />
          </svg>
          <span className="relative">View</span>
        </button>
        <button type="button" role="tab" aria-selected="true" className="relative ml-1 h-[44px] w-[140px]">
          <svg viewBox="0 0 140 44" className="absolute inset-0 h-full w-full" aria-hidden="true">
            <path d="M1 0Q8 38 24 42H116Q130 38 138 0" fill="#ffffff" stroke="#1a1a1a" strokeWidth="3" />
          </svg>
          <span className="relative">Data</span>
        </button>
      </div>
    </div>
  </aside>
);

/* --- 3D scene: the open box with its two sliding walls --- */

const Scene = () => (
  <svg viewBox="1092 438 3004 1586" preserveAspectRatio="xMinYMin meet" className="absolute inset-0 h-full w-full" aria-label="Box model">
    {/* floor and back walls */}
    <polygon points="1727,1098 2585,780 2592,882 3284,1286 3309,1305 2315,1678" fill="#777777" />
    <polygon points="1750,1117 2588,802 2590,882 1823,1172" fill="#969696" />
    <polygon points="2586,714 2601,706 3281,1216 3265,1300 3180,1326 2590,882" fill="#6e6e6e" />
    <polygon points="2586,714 2601,706 3281,1216 3266,1224" fill="#777777" />

    {/* front face and wall ends */}
    <polygon points="2315,1678 3309,1305 3309,1403 2315,1777" fill="#969696" />
    <polygon points="3265,1223 3281,1216 3281,1296 3265,1306" fill="#969696" />

    {/* near left wall with its bracket */}
    <polygon points="1606,1144 1630,1136 1640,1240 2294,1740 2294,1661 2315,1678 2315,1777 1606,1246" fill="#6e6e6e" />
    <polygon points="1631,1052 1653,1043 2337,1557 2337,1658 2300,1660 2293,1745 1628,1245" fill="#6e6e6e" />
    <polygon points="1631,1052 1653,1043 2337,1557 2317,1566" fill="#777777" />
    <polygon points="1631,1163 1643,1158 1643,1238 1631,1243" fill="#969696" />
    <polygon points="2317,1566 2337,1557 2337,1658 2317,1668" fill="#969696" />

    <g fill="none" stroke="#1a1a1a" strokeWidth="5" strokeLinejoin="round">
      <path d="M1727 1098L2585 780M1750 1117L2587 802M1823 1172L2590 882" />
      <path d="M2590 882L3180 1326" />
      <path d="M2585 795V713L2600 706L3281 1216V1296M2587 714L3265 1223M2585 795L2590 799V882" />
      <path d="M3281 1216L3265 1223V1306M3284 1286L3309 1305" />
      <path d="M2340 1644L3255 1299M2315 1678L3309 1305V1403L2315 1777Z" />
      <path d="M1631 1150V1052L1653 1043L2337 1557V1657M1633 1053L2317 1566V1665M2337 1557L2317 1566" />
      <path d="M1630 1136L1607 1144V1246L2315 1777M1609 1149L1629 1163L1645 1158M1628 1163V1245L1642 1240L2293 1726M1628 1245L2293 1745V1661L2308 1657M2294 1662L2315 1678" />
    </g>

    {/* blue slide arrow */}
    <path d="M3235 1192C3205 1090 3090 1022 2912 1022C2600 1022 2330 1180 2315 1490" fill="none" stroke="#00a2ed" strokeWidth="8" />
    <path d="M2315 1537L2292 1482Q2315 1492 2338 1482Z" fill="#00a2ed" />

    {/* yellow offset arrow and dimension lines */}
    <g fill="none" stroke="#fff000">
      <path d="M1466 922C1436 990 1478 1036 1572 1075" strokeWidth="8" />
      <path d="M1606 1043L1648 1020M1601 1035L1611 1051M1643 1011L1653 1028" strokeWidth="4" />
      <path d="M1570 1270L2277 1815M1563 1277L1576 1262M2270 1823L2283 1808" strokeWidth="4" />
    </g>
    <g fill="#fff000">
      <path d="M1612 1090L1569 1048Q1571 1062 1564 1074L1552 1093Z" />
      <path d="M1606 1043L1613 1028L1623 1044ZM1648 1020L1631 1019L1641 1035Z" />
      <path d="M1570 1270L1587 1272L1577 1286ZM2277 1815L2271 1798L2260 1812Z" />
    </g>

    {/* axis cross */}
    <path d="M4019 1944L3994 1926" stroke="#228b22" strokeWidth="6" />
    <path d="M4019 1944L4057 1930" stroke="#8b2222" strokeWidth="6" />
    <path d="M4018 1946V1891" stroke="#20208b" strokeWidth="6" />
  </svg>
);

const Viewport = () => (
  <section className="relative min-h-0 flex-1 overflow-hidden bg-[#706564] font-['Liberation_Sans',Arial,sans-serif]">
    <Scene />
    <p className="absolute left-[224px] top-[230px] whitespace-nowrap text-[68px] leading-[76px] text-[#fff000]">
      Add <strong>offset</strong>
      <br />
      (make it larger
      <br />
      around 0.4 mm to 0.5 mm)
    </p>
    <p className="absolute left-[1518px] top-[353px] whitespace-nowrap text-[96px] leading-[108px] text-[#00a2ed]">
      We want this taller side of box
      <br />
      able to slide into the gap
    </p>
    <p className="absolute left-[780px] top-[813px] origin-top-left skew-y-[38deg] whitespace-nowrap text-[60px] font-bold leading-[70px] text-[#00a2ed]">
      we cut this out
      <br />
      to make a gap
    </p>
    <span className="absolute bottom-[124px] right-[52px] text-[28px] leading-8 text-black">Z</span>
    <span className="absolute bottom-[91px] right-[78px] text-[28px] leading-8 text-black">Y</span>
    <span className="absolute bottom-[84px] right-[16px] text-[28px] leading-8 text-black">X</span>
  </section>
);

const DocumentTabs = () => (
  <div className="flex h-[68px] shrink-0">
    <div className="flex items-center border-b-[3px] border-r-[3px] border-[#dcdcdc] bg-white pl-9 pr-[38px]">
      <Logo className="h-[50px] w-[50px]" />
      <span className="ml-2 pt-2 text-[32px]">StackableLudo : 1*</span>
      <button
        type="button"
        aria-label="Close document"
        className="ml-2 flex h-[43px] w-[43px] items-center justify-center rounded-[6px] border-4 border-[#e04a38] bg-[#e08058]"
      >
        <svg viewBox="0 0 20 20" className="h-5 w-5"><path d="M2 2L18 18M18 2L2 18" stroke="#ffffff" strokeWidth="6" /></svg>
      </button>
    </div>
  </div>
);

const StatusBar = () => (
  <footer className="flex h-[90px] shrink-0 items-center bg-[#f0f0f0] pl-[18px] pr-[3px] pt-1 text-[33px]">
    <p>Valid, Internal name: Fusion009</p>
    <button type="button" className="ml-auto flex items-center">
      <svg viewBox="0 0 34 38" className="h-[38px] w-[34px]" aria-hidden="true">
        <path d="M17 0L33 10V28L17 38L1 28V10Z" fill="#2e3436" />
        <path d="M17 0L33 10L17 19L1 10Z" fill="#7f8487" />
      </svg>
      <span className="ml-5">OpenInventc</span>
      <Triangle className="ml-1 h-3 w-[22px] text-black" />
    </button>
    <span className="ml-6 mr-[14px] h-[75px] w-[2px] bg-[#d4d4d4]" />
    <p>310.14 mm x 163.74 mm</p>
  </footer>
);

const App = () => {
  return (
    <div className="flex h-screen w-full flex-col overflow-hidden bg-[#f0f0f0] font-['Open_Sans','Noto_Sans',sans-serif] text-[34px] leading-[44px] text-[#111111]">
      <Gradients />
      <TitleBar />
      <Toolbars />
      <main className="flex min-h-0 flex-1">
        <ComboView />
        <div className="ml-[15px] flex min-w-0 flex-1 flex-col">
          <Viewport />
          <DocumentTabs />
        </div>
      </main>
      <StatusBar />
    </div>
  );
};

export default App;
